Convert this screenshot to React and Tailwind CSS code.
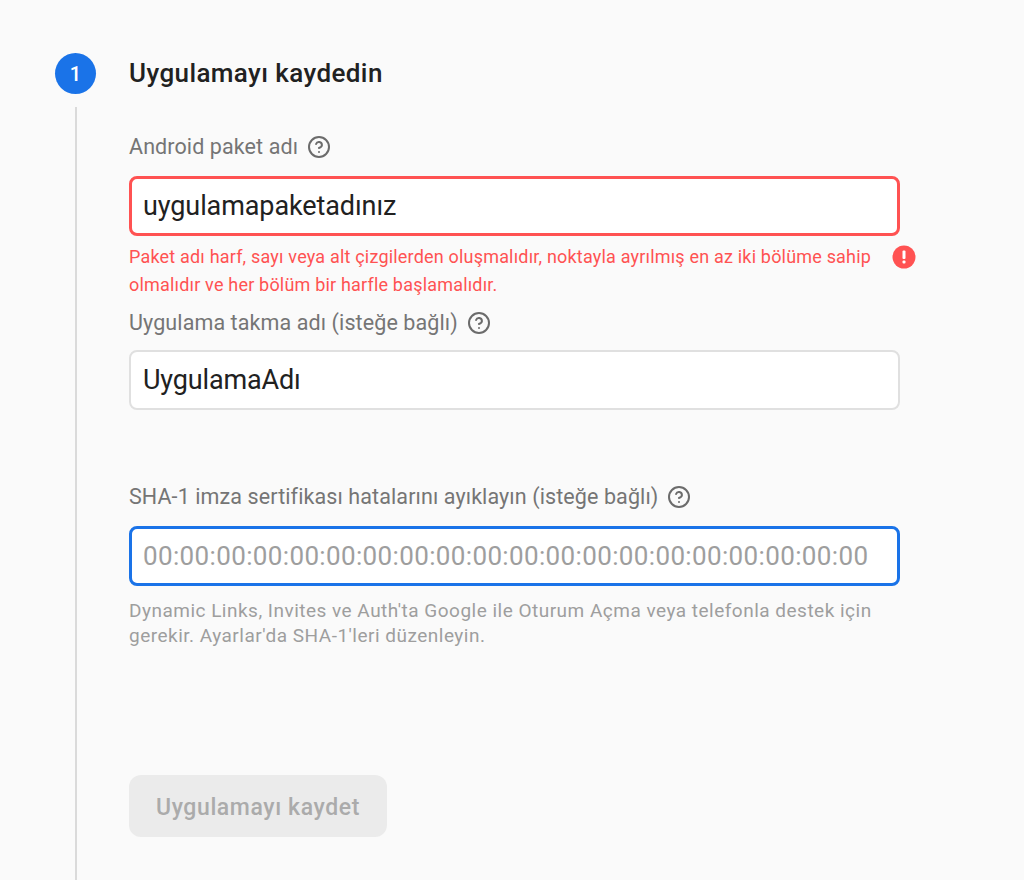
import { CircleHelp } from "lucide-react";

function Label({ children }) {
  return (
    <div className="flex items-center gap-[9px] h-[24px] text-[21.5px] leading-[24px] tracking-[0.1px] text-[#757575]">
      <span>{children}</span>
      <CircleHelp className="w-[24px] h-[24px] text-[#6b6b6b]" strokeWidth={2} />
    </div>
  );
}

export default function App() {
  return (
    <div className="h-[880px] overflow-hidden bg-[#fafafa] flex pl-[55px] pt-[53px] font-['Roboto',sans-serif]">
      {/* Numara ve dikey cizgi */}
      <div className="w-[41px] flex flex-col items-center shrink-0">
        <div className="w-[41px] h-[41px] rounded-full bg-[#1a73e8] text-white text-[20px] font-medium flex items-center justify-center">
          1
        </div>
        <div className="w-[2px] flex-1 mt-[13px] bg-[#dadada]"></div>
      </div>

      <div className="ml-[33px] w-[790px]">
        <h2 className="h-[41px] flex items-center text-[26px] tracking-[0.4px] font-medium text-[#212121]">Uygulamayı kaydedin</h2>

        <div className="mt-[41px]">
          <Label>Android paket adı</Label>
        </div>
        <input
          readOnly
          value="uygulamapaketadınız"
          className="mt-[17px] block w-[771px] h-[60px] px-[11px] bg-white border-[3px] border-[#ff5252] rounded-[8px] text-[27px] tracking-[-0.1px] text-[#212121] outline-none"
        />
        <div className="mt-[7px] flex">
          <p className="w-[755px] text-[18px] leading-[28px] tracking-[0.19px] text-[#ff5252]">
            Paket adı harf, sayı veya alt çizgilerden oluşmalıdır, noktayla ayrılmış en az iki bölüme sahip olmalıdır ve her bölüm bir harfle başlamalıdır.
          </p>
          <svg className="w-[24px] h-[24px] mt-[2px] ml-[8px] shrink-0" viewBox="0 0 24 24">
            <circle cx="12" cy="12" r="11.5" fill="#ff5252" />
            <rect x="10.5" y="5.5" width="3" height="8.5" rx="1" fill="#fff" />
            <rect x="10.5" y="15.5" width="3" height="3" rx="1" fill="#fff" />
          </svg>
        </div>

        <div className="mt-[12px]">
          <Label>Uygulama takma adı (isteğe bağlı)</Label>
        </div>
        <input
          readOnly
          value="UygulamaAdı"
          className="mt-[15px] block w-[771px] h-[60px] px-[12px] bg-white border-2 border-[#e0e0e0] rounded-[8px] text-[27px] tracking-[-0.15px] text-[#212121] outline-none"
        />

        <div className="mt-[75px]">
          <Label>SHA-1 imza sertifikası hatalarını ayıklayın (isteğe bağlı)</Label>
        </div>
        <input
          readOnly
          placeholder="00:00:00:00:00:00:00:00:00:00:00:00:00:00:00:00:00:00:00:00"
          className="mt-[17px] block w-[771px] h-[60px] px-[11px] bg-white border-[3px] border-[#1a73e8] rounded-[8px] text-[26px] tracking-[0.36px] placeholder:text-[#9e9e9e] outline-none"
        />
        <p className="mt-[12px] w-[770px] text-[19px] leading-[25px] tracking-[0.49px] text-[#9e9e9e]">
          Dynamic Links, Invites ve Auth'ta Google ile Oturum Açma veya telefonla destek için gerekir. Ayarlar'da SHA-1'leri düzenleyin.
        </p>

        <button className="mt-[127px] block w-[258px] h-[62px] pt-[5px] rounded-[12px] bg-[#ebebeb] text-[#ababab] text-[23px] tracking-[0.6px] font-medium">
          Uygulamayı kaydet
        </button>
      </div>
    </div>
  );
}
